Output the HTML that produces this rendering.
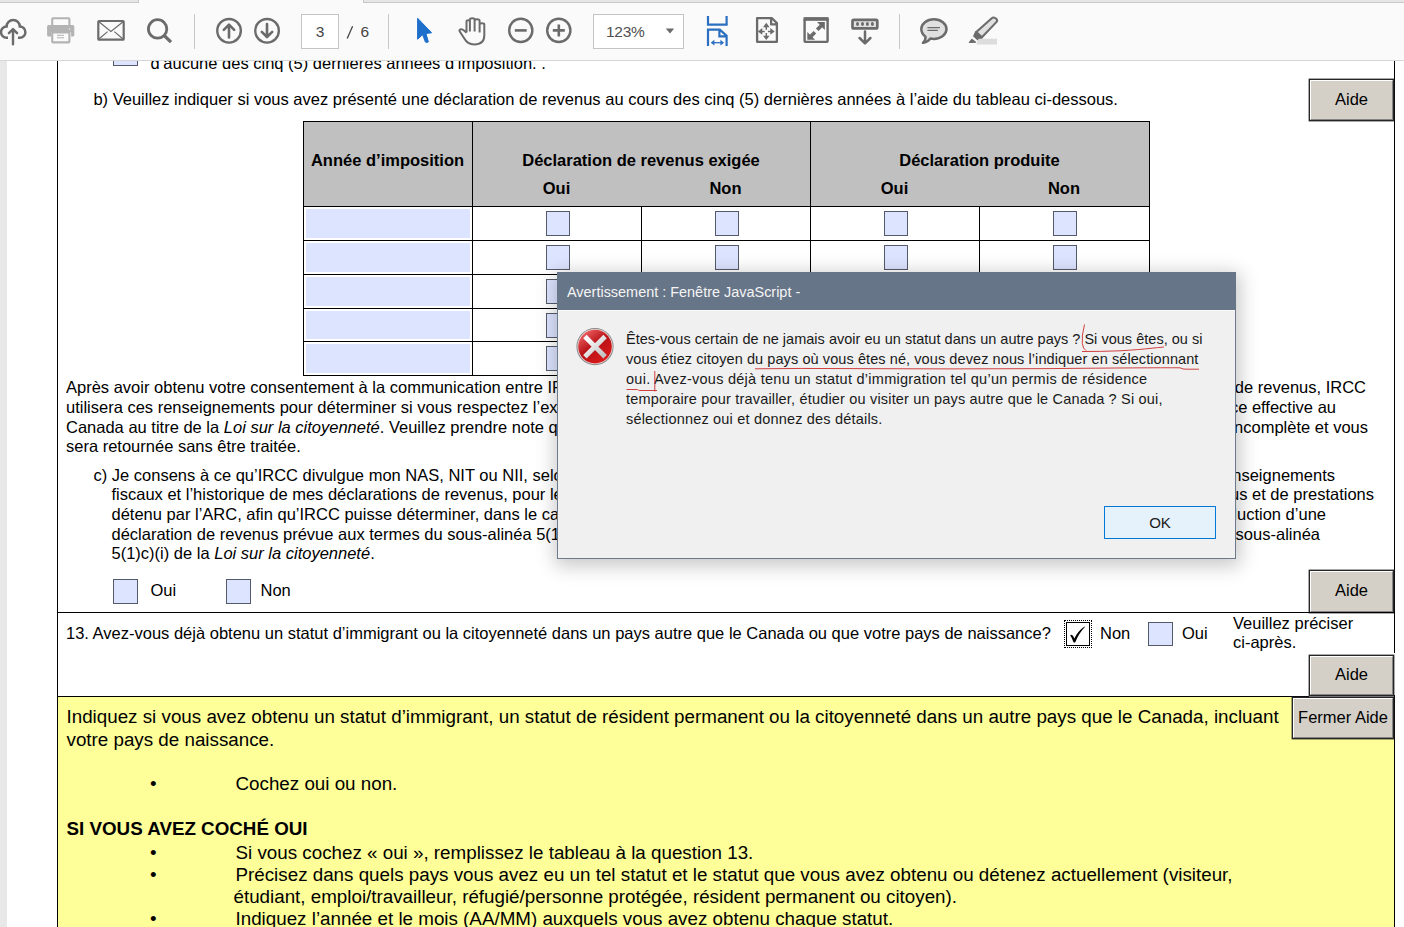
<!DOCTYPE html>
<html><head><meta charset="utf-8"><style>
html,body{margin:0;padding:0;}
body{width:1404px;height:927px;overflow:hidden;position:relative;background:#fff;font-family:"Liberation Sans",sans-serif;}
.t{position:absolute;white-space:pre;line-height:20px;font-family:"Liberation Sans",sans-serif;}
.r{position:absolute;}
.btn{position:absolute;background:#d4d0c8;border:1px solid #262626;box-sizing:border-box;box-shadow:0 0 0 0.4px #262626;}
.bi{position:absolute;left:0;top:0;right:0;bottom:0;border-top:1px solid #fff;border-left:1px solid #fff;border-right:1px solid #858585;border-bottom:1px solid #858585;}
</style></head><body>
<div class="r" style="left:0px;top:61px;width:7px;height:866px;background:#e8e8e8;"></div>
<div class="r" style="left:57px;top:61px;width:1px;height:866px;background:#000;"></div>
<div class="r" style="left:1394px;top:61px;width:1px;height:592px;background:#000;"></div>
<div class="r" style="left:1394px;top:695px;width:1px;height:232px;background:#000;"></div>
<div class="r" style="left:113px;top:40.5px;width:25px;height:25px;background:#dde4ff;border:1px solid #555a6a;box-sizing:border-box;"></div>
<div class="t" style="left:150.5px;top:53px;font-size:16.5px;font-weight:400;font-style:normal;color:#000;">d’aucune des cinq (5) dernières années d’imposition. .</div>
<div class="t" style="left:93.4px;top:89px;font-size:16.5px;font-weight:400;font-style:normal;color:#000;">b) Veuillez indiquer si vous avez présenté une déclaration de revenus au cours des cinq (5) dernières années à l’aide du tableau ci-dessous.</div>
<div class="btn" style="left:1309px;top:79px;width:85px;height:42px;"><div class="bi"></div></div>
<div class="t" style="left:1309px;top:89px;width:85px;text-align:center;font-size:16.5px">Aide</div>
<div class="r" style="left:303px;top:121px;width:846px;height:85px;background:#c0c0c0;"></div>
<div class="r" style="left:303px;top:121px;width:847px;height:1px;background:#000;"></div>
<div class="r" style="left:303px;top:375px;width:847px;height:1px;background:#000;"></div>
<div class="r" style="left:303px;top:121px;width:1px;height:254px;background:#000;"></div>
<div class="r" style="left:1149px;top:121px;width:1px;height:254px;background:#000;"></div>
<div class="r" style="left:303px;top:206px;width:846px;height:1px;background:#000;"></div>
<div class="r" style="left:303px;top:240px;width:846px;height:1px;background:#000;"></div>
<div class="r" style="left:303px;top:274px;width:846px;height:1px;background:#000;"></div>
<div class="r" style="left:303px;top:308px;width:846px;height:1px;background:#000;"></div>
<div class="r" style="left:303px;top:341px;width:846px;height:1px;background:#000;"></div>
<div class="r" style="left:472px;top:121px;width:1px;height:254px;background:#000;"></div>
<div class="r" style="left:810px;top:121px;width:1px;height:254px;background:#000;"></div>
<div class="r" style="left:641px;top:206px;width:1px;height:169px;background:#000;"></div>
<div class="r" style="left:979px;top:206px;width:1px;height:169px;background:#000;"></div>
<div class="t" style="left:303px;top:150px;width:169px;text-align:center;font-size:16.5px;font-weight:700">Année d’imposition</div>
<div class="t" style="left:472px;top:150px;width:338px;text-align:center;font-size:16.5px;font-weight:700">Déclaration de revenus exigée</div>
<div class="t" style="left:810px;top:150px;width:339px;text-align:center;font-size:16.5px;font-weight:700">Déclaration produite</div>
<div class="t" style="left:472px;top:178px;width:169px;text-align:center;font-size:16.5px;font-weight:700">Oui</div>
<div class="t" style="left:641px;top:178px;width:169px;text-align:center;font-size:16.5px;font-weight:700">Non</div>
<div class="t" style="left:810px;top:178px;width:169px;text-align:center;font-size:16.5px;font-weight:700">Oui</div>
<div class="t" style="left:979px;top:178px;width:170px;text-align:center;font-size:16.5px;font-weight:700">Non</div>
<div class="r" style="left:306px;top:209px;width:164px;height:29px;background:#dde4ff;"></div>
<div class="r" style="left:546px;top:211px;width:24px;height:25px;background:#dde4ff;border:1px solid #555a6a;box-sizing:border-box;"></div>
<div class="r" style="left:715px;top:211px;width:24px;height:25px;background:#dde4ff;border:1px solid #555a6a;box-sizing:border-box;"></div>
<div class="r" style="left:884px;top:211px;width:24px;height:25px;background:#dde4ff;border:1px solid #555a6a;box-sizing:border-box;"></div>
<div class="r" style="left:1053px;top:211px;width:24px;height:25px;background:#dde4ff;border:1px solid #555a6a;box-sizing:border-box;"></div>
<div class="r" style="left:306px;top:243px;width:164px;height:29px;background:#dde4ff;"></div>
<div class="r" style="left:546px;top:245px;width:24px;height:25px;background:#dde4ff;border:1px solid #555a6a;box-sizing:border-box;"></div>
<div class="r" style="left:715px;top:245px;width:24px;height:25px;background:#dde4ff;border:1px solid #555a6a;box-sizing:border-box;"></div>
<div class="r" style="left:884px;top:245px;width:24px;height:25px;background:#dde4ff;border:1px solid #555a6a;box-sizing:border-box;"></div>
<div class="r" style="left:1053px;top:245px;width:24px;height:25px;background:#dde4ff;border:1px solid #555a6a;box-sizing:border-box;"></div>
<div class="r" style="left:306px;top:277px;width:164px;height:29px;background:#dde4ff;"></div>
<div class="r" style="left:546px;top:279px;width:24px;height:25px;background:#dde4ff;border:1px solid #555a6a;box-sizing:border-box;"></div>
<div class="r" style="left:715px;top:279px;width:24px;height:25px;background:#dde4ff;border:1px solid #555a6a;box-sizing:border-box;"></div>
<div class="r" style="left:884px;top:279px;width:24px;height:25px;background:#dde4ff;border:1px solid #555a6a;box-sizing:border-box;"></div>
<div class="r" style="left:1053px;top:279px;width:24px;height:25px;background:#dde4ff;border:1px solid #555a6a;box-sizing:border-box;"></div>
<div class="r" style="left:306px;top:311px;width:164px;height:28px;background:#dde4ff;"></div>
<div class="r" style="left:546px;top:313px;width:24px;height:25px;background:#dde4ff;border:1px solid #555a6a;box-sizing:border-box;"></div>
<div class="r" style="left:715px;top:313px;width:24px;height:25px;background:#dde4ff;border:1px solid #555a6a;box-sizing:border-box;"></div>
<div class="r" style="left:884px;top:313px;width:24px;height:25px;background:#dde4ff;border:1px solid #555a6a;box-sizing:border-box;"></div>
<div class="r" style="left:1053px;top:313px;width:24px;height:25px;background:#dde4ff;border:1px solid #555a6a;box-sizing:border-box;"></div>
<div class="r" style="left:306px;top:344px;width:164px;height:29px;background:#dde4ff;"></div>
<div class="r" style="left:546px;top:346px;width:24px;height:25px;background:#dde4ff;border:1px solid #555a6a;box-sizing:border-box;"></div>
<div class="r" style="left:715px;top:346px;width:24px;height:25px;background:#dde4ff;border:1px solid #555a6a;box-sizing:border-box;"></div>
<div class="r" style="left:884px;top:346px;width:24px;height:25px;background:#dde4ff;border:1px solid #555a6a;box-sizing:border-box;"></div>
<div class="r" style="left:1053px;top:346px;width:24px;height:25px;background:#dde4ff;border:1px solid #555a6a;box-sizing:border-box;"></div>
<div class="t" style="left:66px;top:377px;font-size:16.5px;font-weight:400;font-style:normal;color:#000;width:1000px;overflow:hidden;">Après avoir obtenu votre consentement à la communication entre IRCC et l’ARC de vos renseignements fiscaux et de l’historique de vos déclarations</div>
<div class="t" style="left:66px;top:397px;font-size:16.5px;font-weight:400;font-style:normal;color:#000;width:1000px;overflow:hidden;">utilisera ces renseignements pour déterminer si vous respectez l’exigence relative à la présentation de déclarations de revenus pour la présence effective au</div>
<div class="t" style="left:66px;top:417px;font-size:16.5px;font-weight:400;font-style:normal;color:#000;width:1000px;overflow:hidden;">Canada au titre de la <i>Loi sur la citoyenneté</i>. Veuillez prendre note que si vous ne fournissez pas ces renseignements, votre demande sera jugée incomplète et vous</div>
<div class="t" style="left:66px;top:436px;font-size:16.5px;font-weight:400;font-style:normal;color:#000;">sera retournée sans être traitée.</div>
<div class="t" style="right:38px;top:377px;font-size:16.5px;">de revenus, IRCC</div>
<div class="t" style="right:68px;top:397px;font-size:16.5px;">ce effective au</div>
<div class="t" style="right:36px;top:417px;font-size:16.5px;">incomplète et vous</div>
<div class="t" style="left:93.5px;top:465px;font-size:16.5px;font-weight:400;font-style:normal;color:#000;">c) Je consens à ce qu’IRCC divulgue mon NAS, NIT ou NII, selon le cas, à l’ARC, ainsi que mes renseignements</div>
<div class="t" style="left:111.5px;top:484px;font-size:16.5px;font-weight:400;font-style:normal;color:#000;">fiscaux et l’historique de mes déclarations de revenus, pour les renseignements</div>
<div class="t" style="left:111.5px;top:504px;font-size:16.5px;font-weight:400;font-style:normal;color:#000;">détenu par l’ARC, afin qu’IRCC puisse déterminer, dans le cas d’un</div>
<div class="t" style="left:111.5px;top:524px;font-size:16.5px;font-weight:400;font-style:normal;color:#000;">déclaration de revenus prévue aux termes du sous-alinéa 5(1)c)(i)</div>
<div class="t" style="left:111.5px;top:543px;font-size:16.5px;font-weight:400;font-style:normal;color:#000;">5(1)c)(i) de la <i>Loi sur la citoyenneté</i>.</div>
<div class="t" style="right:69px;top:465px;font-size:16.5px;">renseignements</div>
<div class="t" style="right:30px;top:484px;font-size:16.5px;">revenus et de prestations</div>
<div class="t" style="right:78px;top:504px;font-size:16.5px;">production d’une</div>
<div class="t" style="right:84px;top:524px;font-size:16.5px;">du sous-alinéa</div>
<div class="r" style="left:113px;top:579px;width:25px;height:25px;background:#dde4ff;border:1px solid #555a6a;box-sizing:border-box;"></div>
<div class="t" style="left:150.5px;top:580px;font-size:16.5px;font-weight:400;font-style:normal;color:#000;">Oui</div>
<div class="r" style="left:226px;top:579px;width:25px;height:25px;background:#dde4ff;border:1px solid #555a6a;box-sizing:border-box;"></div>
<div class="t" style="left:260.5px;top:580px;font-size:16.5px;font-weight:400;font-style:normal;color:#000;">Non</div>
<div class="btn" style="left:1309px;top:570px;width:85px;height:43px;"><div class="bi"></div></div>
<div class="t" style="left:1309px;top:579.5px;width:85px;text-align:center;font-size:16.5px">Aide</div>
<div class="r" style="left:57px;top:612px;width:1338px;height:1px;background:#000;"></div>
<div class="t" style="left:66px;top:623px;font-size:16.5px;font-weight:400;font-style:normal;color:#000;">13. Avez-vous déjà obtenu un statut d’immigrant ou la citoyenneté dans un pays autre que le Canada ou que votre pays de naissance?</div>
<div class="r" style="left:1064px;top:620px;width:28px;height:28px;border:1px dotted #000;box-sizing:border-box;"></div>
<div class="r" style="left:1066px;top:622px;width:24px;height:24px;border:1px solid #000;background:#fff;box-sizing:border-box;"></div>
<svg class="r" style="left:1060px;top:620px" width="30" height="28" viewBox="1060 620 30 28"><path d="M1070.2 635.4 Q1071.8 633.6 1073.4 636.4 L1074.4 638.4 Q1078.2 630.8 1084.6 626.6 L1084.9 627 Q1079.2 632.8 1075.4 641.9 Q1074.5 642.9 1073.4 641.9 Q1072 637.6 1070.2 635.4 Z" fill="#000"/></svg>
<div class="t" style="left:1100px;top:623px;font-size:16.5px;font-weight:400;font-style:normal;color:#000;">Non</div>
<div class="r" style="left:1148px;top:622px;width:25px;height:24px;background:#dde4ff;border:1px solid #555a6a;box-sizing:border-box;"></div>
<div class="t" style="left:1182px;top:623px;font-size:16.5px;font-weight:400;font-style:normal;color:#000;">Oui</div>
<div class="t" style="left:1233px;top:613px;font-size:16.5px;font-weight:400;font-style:normal;color:#000;">Veuillez préciser</div>
<div class="t" style="left:1233px;top:632px;font-size:16.5px;font-weight:400;font-style:normal;color:#000;">ci-après.</div>
<div class="btn" style="left:1309px;top:655px;width:85px;height:41px;"><div class="bi"></div></div>
<div class="t" style="left:1309px;top:664px;width:85px;text-align:center;font-size:16.5px">Aide</div>
<div class="r" style="left:58px;top:697px;width:1336px;height:230px;background:#ffff99;"></div>
<div class="r" style="left:57px;top:696px;width:1252px;height:1px;background:#000;"></div>
<div class="btn" style="left:1292px;top:697px;width:102px;height:42px;"><div class="bi"></div></div>
<div class="t" style="left:1292px;top:706.5px;width:102px;text-align:center;font-size:16.5px">Fermer Aide</div>
<div class="t" style="left:66.5px;top:707px;font-size:18.8px;font-weight:400;font-style:normal;color:#000;">Indiquez si vous avez obtenu un statut d’immigrant, un statut de résident permanent ou la citoyenneté dans un autre pays que le Canada, incluant</div>
<div class="t" style="left:66.5px;top:730px;font-size:18.8px;font-weight:400;font-style:normal;color:#000;">votre pays de naissance.</div>
<div class="t" style="left:150px;top:774px;font-size:18.8px;font-weight:400;font-style:normal;color:#000;">•</div>
<div class="t" style="left:235.5px;top:774px;font-size:18.8px;font-weight:400;font-style:normal;color:#000;">Cochez oui ou non.</div>
<div class="t" style="left:66.5px;top:819px;font-size:18.8px;font-weight:700;font-style:normal;color:#000;">SI VOUS AVEZ COCHÉ OUI</div>
<div class="t" style="left:150px;top:843px;font-size:18.8px;font-weight:400;font-style:normal;color:#000;">•</div>
<div class="t" style="left:235.5px;top:843px;font-size:18.8px;font-weight:400;font-style:normal;color:#000;">Si vous cochez « oui », remplissez le tableau à la question 13.</div>
<div class="t" style="left:150px;top:865px;font-size:18.8px;font-weight:400;font-style:normal;color:#000;">•</div>
<div class="t" style="left:235.5px;top:865px;font-size:18.8px;font-weight:400;font-style:normal;color:#000;">Précisez dans quels pays vous avez eu un tel statut et le statut que vous avez obtenu ou détenez actuellement (visiteur,</div>
<div class="t" style="left:233.5px;top:887px;font-size:18.8px;font-weight:400;font-style:normal;color:#000;">étudiant, emploi/travailleur, réfugié/personne protégée, résident permanent ou citoyen).</div>
<div class="t" style="left:150px;top:909px;font-size:18.8px;font-weight:400;font-style:normal;color:#000;">•</div>
<div class="t" style="left:235.5px;top:909px;font-size:18.8px;font-weight:400;font-style:normal;color:#000;">Indiquez l’année et le mois (AA/MM) auxquels vous avez obtenu chaque statut.</div>
<div class="r" style="left:0px;top:0px;width:1404px;height:60px;background:#fafafa;"></div>
<div class="r" style="left:0px;top:60px;width:1404px;height:1px;background:#d6d6d6;"></div>
<div class="r" style="left:0px;top:0px;width:138px;height:2px;background:#e6e6e6;border-bottom:1px solid #c8c8c8;border-right:1px solid #c8c8c8;"></div>
<div class="r" style="left:363px;top:0px;width:1041px;height:2px;background:#e6e6e6;border-bottom:1px solid #c8c8c8;border-left:1px solid #c8c8c8;"></div>
<div class="r" style="left:194px;top:14px;width:1px;height:35px;background:#c8c8c8;"></div>
<div class="r" style="left:388px;top:14px;width:1px;height:35px;background:#c8c8c8;"></div>
<div class="r" style="left:899px;top:14px;width:1px;height:35px;background:#c8c8c8;"></div>
<div class="r" style="left:301px;top:14px;width:38px;height:35px;background:#fff;border:1px solid #c4c4c4;box-sizing:border-box;"></div>
<div class="t" style="left:301px;top:14px;width:38px;line-height:35px;text-align:center;font-size:15.5px;color:#444">3</div>
<svg class="r" style="left:340px;top:20px" width="20" height="24" viewBox="340 20 20 24"><path d="M352.6 26.2 L347.2 38.6" stroke="#444" stroke-width="1.3"/></svg>
<div class="t" style="left:360.5px;top:14px;line-height:35px;font-size:15.5px;color:#444">6</div>
<div class="r" style="left:593px;top:14px;width:91px;height:35px;background:#fff;border:1px solid #c4c4c4;box-sizing:border-box;"></div>
<div class="t" style="left:606px;top:14px;line-height:35px;font-size:15.5px;letter-spacing:-0.3px;color:#505050">123%</div>
<svg class="r" style="left:0;top:0" width="1404" height="60" viewBox="0 0 1404 60"><g fill="none" stroke="#6b6b6b" stroke-width="2.2">
<!-- cloud upload -->
<path d="M8 37.8 H6.6 A5.6 5.6 0 0 1 6.6 26.6 H6.6 A6.6 6.6 0 0 1 19.8 26.6 A5.6 5.6 0 0 1 19.8 37.8 H18" stroke-width="2.5"/>
<path d="M13 44.2 V29.4 M8.9 33.2 L13 29.1 L17.1 33.2" stroke-width="2.4" stroke-linejoin="round" stroke-linecap="round"/>
<!-- mail -->
<rect x="98.3" y="21" width="25.4" height="18.7" rx="0.8"/>
<path d="M99.2 22 L110.9 31.4 L122.8 22 M99.2 38.8 L107.6 31.6 M122.8 38.8 L114.3 31.6" stroke-width="1.2"/>
<!-- search -->
<circle cx="157.6" cy="28.9" r="9.2" stroke-width="2.8"/>
<path d="M164.2 35.5 L171 42.2" stroke-width="3.2"/>
<!-- up / down -->
<circle cx="229.05" cy="30.8" r="11.8" stroke-width="2.4"/>
<path d="M229 37.5 V25 M223.8 29.8 L229 24.6 L234.2 29.8" stroke-width="2.6" stroke-linecap="round" stroke-linejoin="round"/>
<circle cx="267.05" cy="30.8" r="11.8" stroke-width="2.4"/>
<path d="M267 24 V36.6 M261.8 31.8 L267 37 L272.2 31.8" stroke-width="2.6" stroke-linecap="round" stroke-linejoin="round"/>
<!-- hand -->
<path d="M466.5 32.5 V21.6 Q466.5 20.2 468.2 20.2 Q469.9 20.2 469.9 21.6 V31.5 M469.9 21.6 V19.6 Q469.9 18.2 472.3 18.2 Q474.6 18.2 474.6 19.6 V31.5 M474.6 21 Q474.6 19.3 477.1 19.3 Q479.6 19.3 479.6 21 V32.5 M479.6 24.6 Q479.6 23.2 482 23.2 Q484.3 23.2 484.3 24.6 V35.5 Q484.3 44.4 474.2 44.4 Q467.5 44.4 464 38 L459.6 31.2 Q459 29.6 460.8 29.2 Q462.8 28.8 466.5 32.8" stroke-width="2" stroke-linejoin="round"/>
<!-- zoom out / in -->
<circle cx="520.75" cy="30.4" r="11.6" stroke-width="2.4"/>
<path d="M514.8 30.4 H526.7" stroke-width="2.6"/>
<circle cx="558.8" cy="30.4" r="11.6" stroke-width="2.4"/>
<path d="M552.8 30.4 H564.8 M558.8 24.4 V36.4" stroke-width="2.6"/>
<!-- page move -->
<path d="M772 18.2 H757.1 V41.8 H776.9 V23.1 Z M771.1 18.6 V24.4 H777.4" stroke-width="2.3" stroke-linejoin="round"/>
<path d="M766.3 26.5 V29.8 M766.3 33 V36.4 M761.5 31.4 H764.7 M767.9 31.4 H771.2" stroke-width="1.5"/>
<!-- fullscreen -->
<rect x="804.6" y="18.6" width="23" height="23.3" rx="0.8" stroke-width="2.4"/>
<!-- keyboard download -->
<rect x="852.5" y="19.8" width="24.8" height="8.6" rx="1.2" fill="#e2e2e2" stroke-width="2.7"/>
<path d="M865 31.5 V42.6 M859.6 38 L865 43.4 L870.4 38" stroke-width="2.5" stroke-linecap="round" stroke-linejoin="round"/>
<!-- comment -->
<path d="M925.5 36.8 Q921.3 33.5 921.3 29.1 C921.3 23.6 926.9 19.3 933.9 19.3 C940.9 19.3 946.5 23.6 946.5 29.1 C946.5 34.6 940.9 38.9 933.9 38.9 Q932 38.9 930.3 38.6 Q927.5 42.5 923 42.8 Q925.8 40 925.5 36.8 Z" fill="#e0e0e0" stroke-width="2.5" stroke-linejoin="round"/>
<path d="M927.4 27.7 H940 M927.4 30.3 H937.9" stroke-width="1.2"/>
<!-- highlighter -->
<path d="M991.47 18.45 Q993.8 16.4 996.2 18.7 Q998.2 21 996.13 22.36 L981.93 37.16 L976.27 32.05 Z" fill="#e0e0e0" stroke-width="2.1" stroke-linejoin="round"/>
</g>
<g fill="#6b6b6b">
<path d="M975.3 31.1 L983.0 38.1 L978.2 41.0 L973.0 36.3 Z"/>
<path d="M969.4 42.4 L971.9 39.4 L975.6 42.2 Z" stroke="#6b6b6b" stroke-width="1.2" stroke-linejoin="round"/>
<!-- fullscreen extras -->
<rect x="803.6" y="17.2" width="25" height="3.6"/>
<path d="M824.8 22.1 L817 22.1 L824.8 29.9 Z"/><path d="M821.2 25.8 L817.2 29.8" stroke="#6b6b6b" stroke-width="3.6"/>
<path d="M807.3 39.8 L815.1 39.8 L807.3 32 Z"/><path d="M810.9 36.2 L814.9 32.2" stroke="#6b6b6b" stroke-width="3.6"/>
<!-- page move arrowheads -->
<path d="M766.3 22.8 L763 27.2 H769.6 Z M766.3 40.1 L763 35.7 H769.6 Z M757.9 31.4 L762.3 28.1 V34.7 Z M774.7 31.4 L770.3 28.1 V34.7 Z"/>
<!-- keyboard dots -->
<ellipse cx="857.5" cy="24.1" rx="1.5" ry="2"/>
<ellipse cx="862.5" cy="24.1" rx="1.5" ry="2"/>
<ellipse cx="867.4" cy="24.1" rx="1.5" ry="2"/>
<ellipse cx="872.4" cy="24.1" rx="1.5" ry="2"/>
</g>
<!-- highlight bar -->
<path d="M978.5 38.8 H997 V44.5 H976.4 Z" fill="#dcdcdc"/>
<!-- printer (disabled) -->
<g fill="none" stroke="#b3b3b3" stroke-width="1.9">
<rect x="52.2" y="18.3" width="17.2" height="8.4" rx="0.8" stroke-width="2.1"/>
<rect x="52.2" y="32.4" width="17.2" height="10" rx="0.8" stroke-width="2.1"/>
<path d="M57 35.3 H64 M57 37.8 H64" stroke-width="1"/>
</g>
<path d="M48.6 25 H72.8 Q74.3 25 74.3 26.5 V35.1 Q74.3 36.6 72.8 36.6 H71.1 V32.4 H51.2 V36.6 H48.6 Q47.1 36.6 47.1 35.1 V26.5 Q47.1 25 48.6 25 Z" fill="#b3b3b3"/>
<circle cx="69.5" cy="28.9" r="0.7" fill="#fafafa"/>
<!-- cursor -->
<path d="M417.6 18.2 V39.2 L422.6 34.7 L425.4 42 Q426.4 43.2 428.4 41.8 L425.9 33.5 L431.6 32.8 Z" fill="#1e6fcc" stroke="#1e6fcc" stroke-width="1" stroke-linejoin="round"/>
<!-- fit width (blue) -->
<g fill="none" stroke="#2a6fc0" stroke-width="2.2">
<path d="M708 16 V24.6 H726.6 V16"/>
<path d="M708 46 V29.6 H719.8 L726.6 35.8 V46 M719.4 30 V36.4 H727"/>
<path d="M712.5 42.7 H722.3" stroke-width="1.3"/>
</g>
<path d="M710.7 42.7 L714.4 39.8 V45.6 Z M724.1 42.7 L720.4 39.8 V45.6 Z" fill="#2a6fc0"/>
<!-- dropdown triangle -->
<path d="M665.8 28.6 H674.2 L670 33.6 Z" fill="#6b6b6b"/>
</svg>
<div class="r" style="left:557px;top:272px;width:679px;height:287px;box-shadow:1px 4px 18px 3px rgba(0,0,0,0.22);background:#f0f0f0;border:1px solid #6d7a8c;box-sizing:border-box;"></div>
<div class="r" style="left:557px;top:272px;width:679px;height:38px;background:#677588;"></div>
<div class="r" style="left:558px;top:310px;width:677px;height:1px;background:#fafafa;"></div>
<div class="t" style="left:567px;top:282px;font-size:14.45px;font-weight:400;font-style:normal;color:#f4f4f4;">Avertissement : Fenêtre JavaScript -</div>
<svg class="r" style="left:575px;top:327px" width="40" height="40" viewBox="0 0 40 40">
<defs><linearGradient id="rg" x1="0.2" y1="0.1" x2="0.8" y2="0.9"><stop offset="0" stop-color="#e85a5a"/><stop offset="0.45" stop-color="#b81218"/><stop offset="1" stop-color="#d81a1a"/></linearGradient>
<linearGradient id="xg" x1="0" y1="0" x2="1" y2="1"><stop offset="0" stop-color="#ffffff"/><stop offset="1" stop-color="#c4c4c4"/></linearGradient></defs>
<circle cx="20" cy="19.6" r="18.6" fill="#8a8a8a"/><circle cx="20" cy="19.6" r="17.6" fill="#f2d8d8"/><circle cx="20" cy="19.6" r="16.8" fill="url(#rg)"/>
<path d="M11.6 11.2 L28.4 28 M28.4 11.2 L11.6 28" stroke="url(#xg)" stroke-width="4.8" stroke-linecap="square"/>
</svg>
<div class="t" style="left:626px;top:329px;font-size:14.5px;font-weight:400;font-style:normal;color:#1a1a1a;letter-spacing:0.02px">Êtes-vous certain de ne jamais avoir eu un statut dans un autre pays ? Si vous êtes, ou si</div>
<div class="t" style="left:626px;top:349px;font-size:14.5px;font-weight:400;font-style:normal;color:#1a1a1a;letter-spacing:0.085px">vous étiez citoyen du pays où vous êtes né, vous devez nous l’indiquer en sélectionnant</div>
<div class="t" style="left:626px;top:369px;font-size:14.5px;font-weight:400;font-style:normal;color:#1a1a1a;letter-spacing:0.26px">oui. Avez-vous déjà tenu un statut d’immigration tel qu’un permis de résidence</div>
<div class="t" style="left:626px;top:389px;font-size:14.5px;font-weight:400;font-style:normal;color:#1a1a1a;letter-spacing:0.18px">temporaire pour travailler, étudier ou visiter un pays autre que le Canada ? Si oui,</div>
<div class="t" style="left:626px;top:409px;font-size:14.5px;font-weight:400;font-style:normal;color:#1a1a1a;letter-spacing:0.19px">sélectionnez oui et donnez des détails.</div>
<svg class="r" style="left:0;top:0" width="1404" height="927" viewBox="0 0 1404 927" fill="none" stroke="#d04040" stroke-width="1">
<path d="M1084.5 324.5 Q1081.5 336 1082.3 343.5 Q1083 349 1086 350.5"/>
<path d="M1082 351.5 Q1100 351.6 1120 350.8 Q1140 349.6 1150 348.4 Q1158 347.6 1164 347"/>
<path d="M755 368.8 Q800 368.2 850 368.6 Q950 369.2 1050 368.6 Q1150 367.6 1180 367.8 Q1183 369.4 1186 369.2 L1199 369.2"/>
<path d="M626.5 389.5 H637.5 Q638 390.5 640 390.5 H657"/>
<path d="M654.8 371 V391.5"/>
</svg>
<div class="r" style="left:1104px;top:506px;width:112px;height:33px;background:#e5f1fb;border:1px solid #0078d7;box-sizing:border-box;"></div>
<div class="t" style="left:1104px;top:506px;width:112px;line-height:33px;text-align:center;font-size:15px;color:#1a1a1a">OK</div>
</body></html>
